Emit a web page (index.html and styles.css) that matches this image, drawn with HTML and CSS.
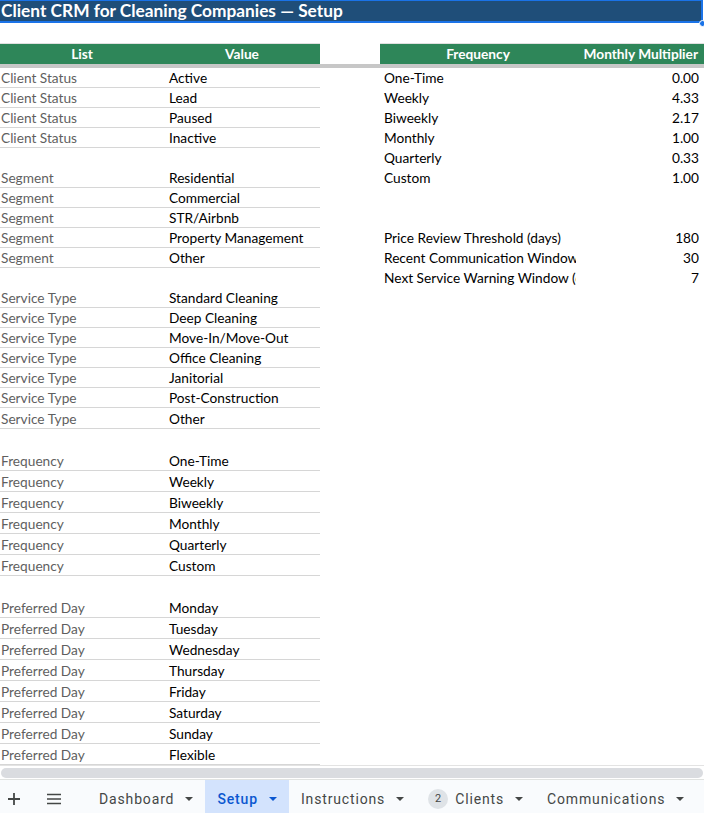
FILE: index.html
```html
<!DOCTYPE html>
<html>
<head>
<meta charset="utf-8">
<link rel="stylesheet" href="styles.css">
</head>
<body>
<div class="sheet">
  <div class="title-row">
    <div class="title">Client CRM for Cleaning Companies — Setup</div>
    <span class="handle"></span>
  </div>
  <div class="blank-row"></div>
  <div class="head-row">
    <div class="lt head"><div class="ca center">List</div><div class="cb center">Value</div></div>
    <div class="gapcol"></div>
    <div class="rt head"><div class="cd center">Frequency</div><div class="ce right">Monthly Multiplier</div></div>
  </div>
  <div class="freeze"></div>
  <div class="body">
    <div class="lt-col">
      <div class="r b"><div class="ca k">Client Status</div><div class="cb">Active</div></div>
      <div class="r b"><div class="ca k">Client Status</div><div class="cb">Lead</div></div>
      <div class="r b"><div class="ca k">Client Status</div><div class="cb">Paused</div></div>
      <div class="r b"><div class="ca k">Client Status</div><div class="cb">Inactive</div></div>
      <div class="r"></div>
      <div class="r b"><div class="ca k">Segment</div><div class="cb">Residential</div></div>
      <div class="r b"><div class="ca k">Segment</div><div class="cb">Commercial</div></div>
      <div class="r b"><div class="ca k">Segment</div><div class="cb">STR/Airbnb</div></div>
      <div class="r b"><div class="ca k">Segment</div><div class="cb">Property Management</div></div>
      <div class="r b"><div class="ca k">Segment</div><div class="cb">Other</div></div>
      <div class="r"></div>
      <div class="r b"><div class="ca k">Service Type</div><div class="cb">Standard Cleaning</div></div>
      <div class="r b"><div class="ca k">Service Type</div><div class="cb">Deep Cleaning</div></div>
      <div class="r b"><div class="ca k">Service Type</div><div class="cb">Move-In/Move-Out</div></div>
      <div class="r b"><div class="ca k">Service Type</div><div class="cb">Office Cleaning</div></div>
      <div class="r b"><div class="ca k">Service Type</div><div class="cb">Janitorial</div></div>
      <div class="r b"><div class="ca k">Service Type</div><div class="cb">Post-Construction</div></div>
      <div class="r t b"><div class="ca k">Service Type</div><div class="cb">Other</div></div>
      <div class="r t"></div>
      <div class="r t b"><div class="ca k">Frequency</div><div class="cb">One-Time</div></div>
      <div class="r t b"><div class="ca k">Frequency</div><div class="cb">Weekly</div></div>
      <div class="r t b"><div class="ca k">Frequency</div><div class="cb">Biweekly</div></div>
      <div class="r t b"><div class="ca k">Frequency</div><div class="cb">Monthly</div></div>
      <div class="r t b"><div class="ca k">Frequency</div><div class="cb">Quarterly</div></div>
      <div class="r t b"><div class="ca k">Frequency</div><div class="cb">Custom</div></div>
      <div class="r t"></div>
      <div class="r t b"><div class="ca k">Preferred Day</div><div class="cb">Monday</div></div>
      <div class="r t b"><div class="ca k">Preferred Day</div><div class="cb">Tuesday</div></div>
      <div class="r t b"><div class="ca k">Preferred Day</div><div class="cb">Wednesday</div></div>
      <div class="r t b"><div class="ca k">Preferred Day</div><div class="cb">Thursday</div></div>
      <div class="r t b"><div class="ca k">Preferred Day</div><div class="cb">Friday</div></div>
      <div class="r t b"><div class="ca k">Preferred Day</div><div class="cb">Saturday</div></div>
      <div class="r t b"><div class="ca k">Preferred Day</div><div class="cb">Sunday</div></div>
      <div class="r t b"><div class="ca k">Preferred Day</div><div class="cb">Flexible</div></div>
    </div>
    <div class="gapcol"></div>
    <div class="rt-col">
      <div class="r"><div class="cd">One-Time</div><div class="ce right">0.00</div></div>
      <div class="r"><div class="cd">Weekly</div><div class="ce right">4.33</div></div>
      <div class="r"><div class="cd">Biweekly</div><div class="ce right">2.17</div></div>
      <div class="r"><div class="cd">Monthly</div><div class="ce right">1.00</div></div>
      <div class="r"><div class="cd">Quarterly</div><div class="ce right">0.33</div></div>
      <div class="r"><div class="cd">Custom</div><div class="ce right">1.00</div></div>
      <div class="r"></div>
      <div class="r"></div>
      <div class="r"><div class="cd">Price Review Threshold (days)</div><div class="ce right">180</div></div>
      <div class="r"><div class="cd">Recent Communication Window (days)</div><div class="ce right">30</div></div>
      <div class="r"><div class="cd">Next Service Warning Window (days)</div><div class="ce right">7</div></div>
    </div>
  </div>
  <div class="scroll"><div class="track"></div></div>
  <div class="tabs">
    <div class="icon plus">
      <svg width="14" height="14" viewBox="0 0 14 14"><path d="M7 1v12M1 7h12" stroke="#444746" stroke-width="1.8"/></svg>
    </div>
    <div class="icon menu">
      <svg width="16" height="12" viewBox="0 0 16 12"><path d="M1 1.5h14M1 6h14M1 10.5h14" stroke="#444746" stroke-width="1.6"/></svg>
    </div>
    <div class="tab">Dashboard<span class="arrow"></span></div>
    <div class="tab active">Setup<span class="arrow"></span></div>
    <div class="tab">Instructions<span class="arrow"></span></div>
    <div class="tab"><span class="badge">2</span>Clients<span class="arrow"></span></div>
    <div class="tab">Communications<span class="arrow"></span></div>
  </div>
</div>
</body>
</html>
```

FILE: styles.css
```css
* { box-sizing: border-box; }
html, body { margin: 0; padding: 0; background: #fff; }
body { width: 704px; height: 813px; overflow: hidden; font-family: Lato, "Open Sans", sans-serif; font-size: 13.7px; color: #000; }
.sheet { width: 704px; height: 813px; display: flex; flex-direction: column; overflow: hidden; }

.title-row { position: relative; height: 23px; flex: none; }
.title { height: 23px; background: #1f4e79; color: #fff; font-weight: 700; font-size: 17.3px; line-height: 20px; padding-left: 1px; border: 2px solid #1a73e8; border-left: none; border-top-width: 1px; margin-right: 1px; white-space: nowrap; overflow: hidden; }
.handle { position: absolute; right: -2px; bottom: -4px; width: 7px; height: 7px; border-radius: 50%; background: #1a73e8; border: 1px solid #fff; }

.blank-row { height: 20px; flex: none; }

.head-row { display: flex; height: 21px; flex: none; }
.head { display: flex; background: #2e8659; color: #fff; font-weight: 700; line-height: 20px; border-top: 1px solid #e0e0e0; }
.lt { width: 320px; }
.rt { width: 324px; }
.gapcol { width: 60px; flex: none; }
.ca { width: 164px; padding-left: 1px; white-space: nowrap; overflow: hidden; }
.cb { width: 156px; padding-left: 5px; white-space: nowrap; overflow: hidden; }
.cd { width: 196px; padding-left: 4px; white-space: nowrap; overflow: hidden; }
.ce { width: 128px; padding-right: 5px; white-space: nowrap; overflow: hidden; }
.center { text-align: center; padding-left: 0; padding-right: 0; }
.right { text-align: right; }
.head .ce { padding-right: 6px; }

.freeze { height: 4px; background: #c7c7c7; flex: none; }

.body { display: flex; flex: 1; min-height: 0; overflow: hidden; }
.lt-col { width: 320px; flex: none; }
.rt-col { width: 324px; flex: none; }
.r { display: flex; height: 20px; line-height: 20px; }
.r.t { height: 21px; padding-top: 1px; }
.r.b { border-bottom: 1px solid #d6d6d6; }
.k { color: #5f5f5f; }

.scroll { height: 14px; flex: none; padding: 2px 0 2px 0; border-top: 1px solid #e3e3e3; }
.track { height: 10px; background: #dadce0; border-radius: 5px; margin: 0 1px; }

.tabs { height: 34px; flex: none; background: #f9fbfd; border-top: 1px solid #e1e3e1; display: flex; align-items: stretch; font-family: Roboto, "Noto Sans", sans-serif; font-size: 14px; letter-spacing: 0.85px; color: #444746; }
.icon { display: flex; align-items: center; justify-content: center; padding-top: 4px; }
.plus { width: 28px; margin-left: 0; }
.menu { width: 28px; margin-left: 12px; margin-right: 19px; }
.tab { display: flex; align-items: center; padding: 4px 12px 0 12px; white-space: nowrap; }
.tab .arrow { margin-left: 11px; width: 0; height: 0; border-left: 4.5px solid transparent; border-right: 4.5px solid transparent; border-top: 4.5px solid #444746; }
.tab.active { background: #d3e3fd; color: #0b57d0; font-weight: 500; }
.tab.active .arrow { border-top-color: #0b57d0; }
.badge { display: inline-flex; align-items: center; justify-content: center; width: 20px; height: 20px; border-radius: 50%; background: #dfe3e7; font-size: 11px; letter-spacing: 0; margin-right: 7px; color: #444746; }
```
